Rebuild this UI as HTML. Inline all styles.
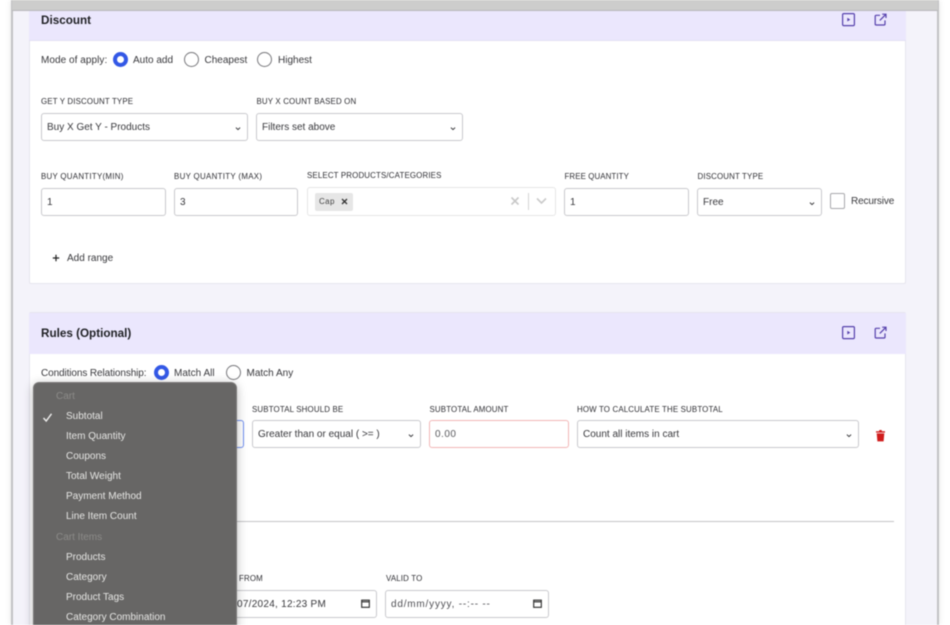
<!DOCTYPE html>
<html><head><meta charset="utf-8">
<style>
html,body{margin:0;padding:0;background:#fff;}
body{width:950px;height:625px;overflow:hidden;position:relative;font-family:"Liberation Sans",sans-serif;color:#3a3a3e;}
#wrap{position:absolute;left:0;top:0;width:950px;height:625px;filter:blur(.4px);overflow:hidden;}
.a{position:absolute;}
.t{position:absolute;white-space:nowrap;font-size:10px;line-height:12px;letter-spacing:0;color:#38383c;margin-top:1px;}
.l{position:absolute;white-space:nowrap;font-size:7.9px;line-height:10px;letter-spacing:.16px;color:#2e2e33;margin-top:2px;}
.f{position:absolute;box-sizing:border-box;background:#fff;border:1px solid #c9c9cd;border-radius:3px;height:28px;font-size:10px;line-height:27px;padding-left:5px;letter-spacing:0;color:#38383c;white-space:nowrap;}
.chev{position:absolute;width:6px;height:5px;top:12px;right:6px;}
.r{position:absolute;box-sizing:border-box;width:15px;height:15px;border-radius:50%;border:1px solid #77777b;background:#fff;}
.r.on{border:4.5px solid #3358e6;}
.h{position:absolute;font-size:11.7px;line-height:16px;font-weight:bold;color:#1f2024;white-space:nowrap;margin-top:1px;}
.m{position:absolute;left:66px;white-space:nowrap;font-size:10px;line-height:12px;color:#e6e6e4;margin-top:1px;}
.g{position:absolute;left:56px;white-space:nowrap;font-size:10px;line-height:12px;color:#8c8b89;margin-top:1px;}
</style></head><body><div id="wrap">

<!-- window -->
<div class="a" style="left:12px;top:0;width:926px;height:625px;background:#f4f3fa;box-shadow:0 0 7px rgba(0,0,0,.14);"></div>
<div class="a" style="left:11px;top:0;width:2px;height:625px;background:#c2c2c4;"></div>
<div class="a" style="left:937px;top:0;width:2px;height:625px;background:#c2c2c4;"></div>
<div class="a" style="left:12px;top:0;width:926px;height:11px;box-sizing:border-box;background:#cdcdcc;border-bottom:1px solid #b8b8bb;"></div>

<!-- Discount card -->
<div class="a" style="left:29px;top:11px;width:877px;height:273px;box-sizing:border-box;background:#fff;border:1px solid #e6e5ee;border-top:0;border-radius:0 0 2px 2px;"></div>
<div class="a" style="left:29px;top:11px;width:877px;height:30px;background:#ebe7fd;border-bottom:1px solid #e3e0f3;box-sizing:border-box;"></div>
<div class="h" style="left:41px;top:12px;">Discount</div>
<svg class="a" style="left:841px;top:12px" width="15" height="15" viewBox="0 0 15 15"><rect x="1.6" y="1.6" width="11.8" height="12" rx="1.2" fill="none" stroke="#5540ac" stroke-width="1.2"/><path d="M6.3 5.7L9.3 7.6L6.3 9.5Z" fill="#5540ac"/></svg>
<svg class="a" style="left:873px;top:12px" width="15" height="15" viewBox="0 0 15 15"><path d="M7 3.3H3.2a1 1 0 0 0-1 1V12a1 1 0 0 0 1 1H11a1 1 0 0 0 1-1V8.4M6.8 8.4L13 2.2M9.2 2.2H13V6" fill="none" stroke="#5540ac" stroke-width="1.2"/></svg>

<div class="t" style="left:41px;top:54px;letter-spacing:.05px;">Mode of apply:</div>
<div class="r on" style="left:113px;top:52px;"></div>
<div class="t" style="left:133px;top:54px;">Auto add</div>
<div class="r" style="left:184px;top:52px;"></div>
<div class="t" style="left:204.5px;top:54px;">Cheapest</div>
<div class="r" style="left:257px;top:52px;"></div>
<div class="t" style="left:278px;top:54px;">Highest</div>

<div class="l" style="left:41px;top:95px;">GET Y DISCOUNT TYPE</div>
<div class="l" style="left:256.5px;top:95px;">BUY X COUNT BASED ON</div>
<div class="f" style="left:41px;top:113px;width:207px;">Buy X Get Y - Products<svg class="chev" viewBox="0 0 8 6"><path d="M1.2 1.8L4 4.4L6.8 1.8" fill="none" stroke="#3a3a3e" stroke-width="1.3"/></svg></div>
<div class="f" style="left:256px;top:113px;width:207px;">Filters set above<svg class="chev" viewBox="0 0 8 6"><path d="M1.2 1.8L4 4.4L6.8 1.8" fill="none" stroke="#3a3a3e" stroke-width="1.3"/></svg></div>

<div class="l" style="left:41px;top:170px;letter-spacing:.28px;">BUY QUANTITY(MIN)</div>
<div class="l" style="left:174px;top:170px;letter-spacing:.32px;">BUY QUANTITY (MAX)</div>
<div class="l" style="left:307px;top:169px;">SELECT PRODUCTS/CATEGORIES</div>
<div class="l" style="left:564.5px;top:170px;letter-spacing:.1px;">FREE QUANTITY</div>
<div class="l" style="left:697.5px;top:170px;">DISCOUNT TYPE</div>

<div class="f" style="left:41px;top:188px;width:124.5px;">1</div>
<div class="f" style="left:174px;top:188px;width:124px;">3</div>
<div class="f" style="left:307px;top:187px;width:249px;height:29px;border-color:#e6e6e6;"></div>
<div class="a" style="left:315px;top:193px;width:38px;height:18px;background:#e6e6e6;border-radius:2px;"></div>
<div class="a" style="left:319px;top:196px;font-size:8px;line-height:12px;letter-spacing:.4px;color:#444;">Cap</div>
<svg class="a" style="left:341px;top:198px" width="7" height="7" viewBox="0 0 7 7"><path d="M1 1L6 6M6 1L1 6" stroke="#333" stroke-width="1.3"/></svg>
<svg class="a" style="left:510px;top:196px" width="10" height="10" viewBox="0 0 10 10"><path d="M1.5 1.5L8.5 8.5M8.5 1.5L1.5 8.5" stroke="#c8c8c8" stroke-width="1.6"/></svg>
<div class="a" style="left:528px;top:193px;width:1px;height:17px;background:#d4d4d4;"></div>
<svg class="a" style="left:536px;top:197px" width="11" height="8" viewBox="0 0 11 8"><path d="M1 1.5L5.5 6L10 1.5" fill="none" stroke="#cacaca" stroke-width="1.6"/></svg>
<div class="f" style="left:564px;top:188px;width:125px;">1</div>
<div class="f" style="left:697px;top:188px;width:125px;">Free<svg class="chev" viewBox="0 0 8 6"><path d="M1.2 1.8L4 4.4L6.8 1.8" fill="none" stroke="#3a3a3e" stroke-width="1.3"/></svg></div>
<div class="a" style="left:830px;top:193px;width:15px;height:16px;box-sizing:border-box;border:1px solid #a8a8ac;border-radius:2px;background:#fff;"></div>
<div class="t" style="left:851px;top:195px;letter-spacing:-.15px;">Recursive</div>

<svg class="a" style="left:52px;top:254px" width="8" height="8" viewBox="0 0 8 8"><path d="M4 .8V7.2M.8 4H7.2" stroke="#222" stroke-width="1.2"/></svg>
<div class="t" style="left:67px;top:252px;">Add range</div>

<!-- Rules card -->
<div class="a" style="left:29px;top:312px;width:877px;height:320px;box-sizing:border-box;background:#fff;border:1px solid #e6e5ee;border-radius:2px;"></div>
<div class="a" style="left:29px;top:312.5px;width:877px;height:41.5px;background:#ebe7fd;"></div>
<div class="h" style="left:41px;top:325px;">Rules (Optional)</div>
<svg class="a" style="left:841px;top:325px" width="15" height="15" viewBox="0 0 15 15"><rect x="1.6" y="1.6" width="11.8" height="12" rx="1.2" fill="none" stroke="#5540ac" stroke-width="1.2"/><path d="M6.3 5.7L9.3 7.6L6.3 9.5Z" fill="#5540ac"/></svg>
<svg class="a" style="left:873px;top:325px" width="15" height="15" viewBox="0 0 15 15"><path d="M7 3.3H3.2a1 1 0 0 0-1 1V12a1 1 0 0 0 1 1H11a1 1 0 0 0 1-1V8.4M6.8 8.4L13 2.2M9.2 2.2H13V6" fill="none" stroke="#5540ac" stroke-width="1.2"/></svg>

<div class="t" style="left:41px;top:367px;letter-spacing:-.1px;">Conditions Relationship:</div>
<div class="r on" style="left:154px;top:365px;"></div>
<div class="t" style="left:174px;top:367px;">Match All</div>
<div class="r" style="left:226px;top:365px;"></div>
<div class="t" style="left:246.5px;top:367px;">Match Any</div>

<div class="l" style="left:252px;top:403px;">SUBTOTAL SHOULD BE</div>
<div class="l" style="left:429.5px;top:403px;">SUBTOTAL AMOUNT</div>
<div class="l" style="left:577px;top:403px;">HOW TO CALCULATE THE SUBTOTAL</div>
<div class="f" style="left:200px;top:420px;width:44px;border-color:#6f8ff0;"></div>
<div class="f" style="left:252px;top:420px;width:169px;">Greater than or equal ( &gt;= )<svg class="chev" viewBox="0 0 8 6"><path d="M1.2 1.8L4 4.4L6.8 1.8" fill="none" stroke="#3a3a3e" stroke-width="1.3"/></svg></div>
<div class="f" style="left:429px;top:420px;width:139.5px;border-color:#f2b6b6;color:#5a5a5e;letter-spacing:.5px;">0.00</div>
<div class="f" style="left:577px;top:420px;width:282px;">Count all items in cart<svg class="chev" viewBox="0 0 8 6"><path d="M1.2 1.8L4 4.4L6.8 1.8" fill="none" stroke="#3a3a3e" stroke-width="1.3"/></svg></div>
<svg class="a" style="left:875px;top:429px" width="11" height="13" viewBox="0 0 11 13"><path d="M1 2.3H4L4.4 1H6.6L7 2.3H10V3.6H1ZM1.7 4.4H9.3L8.6 12.4H2.4Z" fill="#d01c1c"/></svg>

<div class="a" style="left:41px;top:521px;width:853px;height:1px;background:#c4c4c6;"></div>

<div class="l" style="left:239px;top:572px;">FROM</div>
<div class="l" style="left:386px;top:572px;">VALID TO</div>
<div class="f" style="left:200px;top:590px;width:177px;padding-left:36px;letter-spacing:.27px;">07/2024, 12:23 PM<svg class="a" style="left:159px;top:7px" width="11" height="11" viewBox="0 0 11 11"><path d="M1.7 2.2H9.3V9.3H1.7ZM1.7 3.8H9.3" fill="none" stroke="#2a2a2a" stroke-width="1.1"/></svg></div>
<div class="f" style="left:385px;top:590px;width:164px;color:#4e4e53;letter-spacing:.8px;">dd/mm/yyyy, --:-- --<svg class="a" style="left:146px;top:7px" width="11" height="11" viewBox="0 0 11 11"><path d="M1.7 2.2H9.3V9.3H1.7ZM1.7 3.8H9.3" fill="none" stroke="#2a2a2a" stroke-width="1.1"/></svg></div>

<!-- popup menu -->
<div class="a" style="left:33px;top:382px;width:204px;height:260px;box-sizing:border-box;background:#676665;border:1px solid #7b7a79;border-radius:6px;box-shadow:0 2px 10px rgba(0,0,0,.28);"></div>
<div class="g" style="top:390px;">Cart</div>
<svg class="a" style="left:42px;top:412px" width="11" height="11" viewBox="0 0 11 11"><path d="M1.5 6L4.2 9L9.5 1.8" fill="none" stroke="#efefee" stroke-width="1.4"/></svg>
<div class="m" style="top:410px;">Subtotal</div>
<div class="m" style="top:430px;">Item Quantity</div>
<div class="m" style="top:450px;">Coupons</div>
<div class="m" style="top:470px;">Total Weight</div>
<div class="m" style="top:490px;">Payment Method</div>
<div class="m" style="top:510px;">Line Item Count</div>
<div class="g" style="top:531px;">Cart Items</div>
<div class="m" style="top:551px;">Products</div>
<div class="m" style="top:571px;">Category</div>
<div class="m" style="top:591px;">Product Tags</div>
<div class="m" style="top:611px;">Category Combination</div>

</div></body></html>
